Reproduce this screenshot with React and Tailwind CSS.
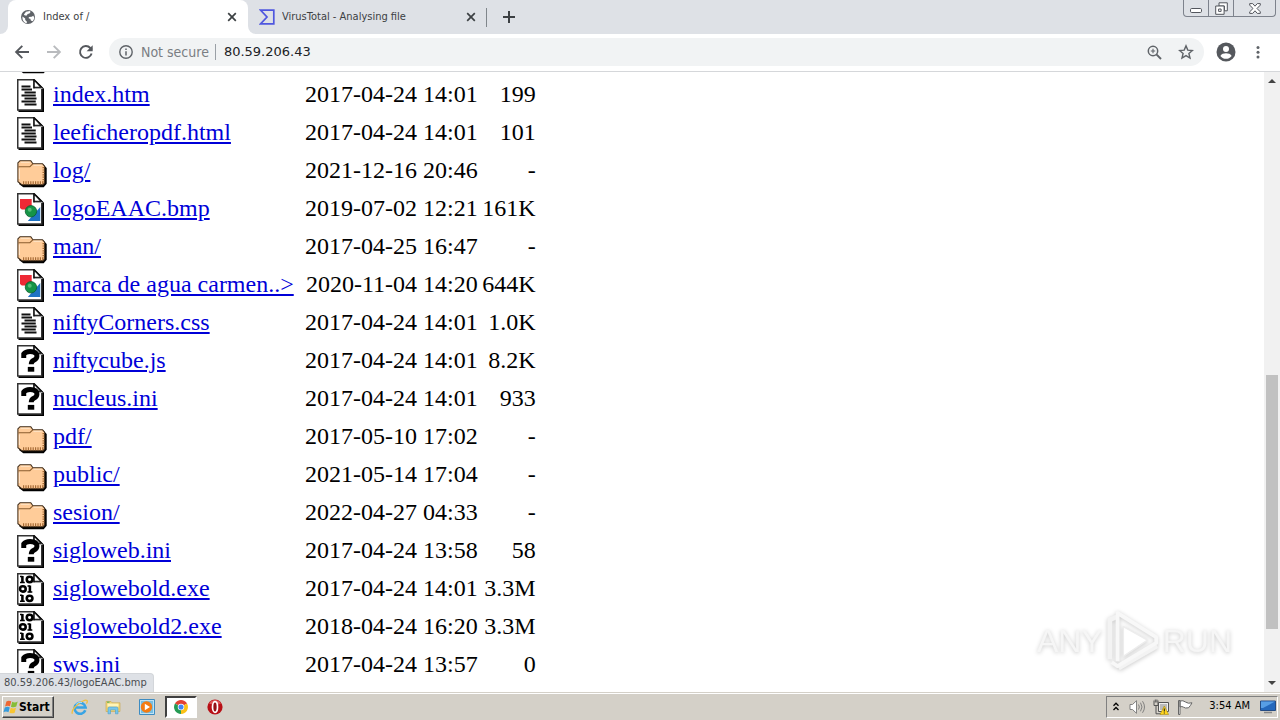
import React from "react";

const UI = "font-['DejaVu_Sans_Condensed','DejaVu_Sans',sans-serif]";

const FILES = [
  { icon: "folder", name: "", date: "", size: "" },
  { icon: "text", name: "index.htm", date: "2017-04-24 14:01", size: "199" },
  { icon: "text", name: "leeficheropdf.html", date: "2017-04-24 14:01", size: "101" },
  { icon: "folder", name: "log/", date: "2021-12-16 20:46", size: "-" },
  { icon: "image", name: "logoEAAC.bmp", date: "2019-07-02 12:21", size: "161K" },
  { icon: "folder", name: "man/", date: "2017-04-25 16:47", size: "-" },
  { icon: "image", name: "marca de agua carmen..>", date: "2020-11-04 14:20", size: "644K" },
  { icon: "text", name: "niftyCorners.css", date: "2017-04-24 14:01", size: "1.0K" },
  { icon: "unknown", name: "niftycube.js", date: "2017-04-24 14:01", size: "8.2K" },
  { icon: "unknown", name: "nucleus.ini", date: "2017-04-24 14:01", size: "933" },
  { icon: "folder", name: "pdf/", date: "2017-05-10 17:02", size: "-" },
  { icon: "folder", name: "public/", date: "2021-05-14 17:04", size: "-" },
  { icon: "folder", name: "sesion/", date: "2022-04-27 04:33", size: "-" },
  { icon: "unknown", name: "sigloweb.ini", date: "2017-04-24 13:58", size: "58" },
  { icon: "binary", name: "siglowebold.exe", date: "2017-04-24 14:01", size: "3.3M" },
  { icon: "binary", name: "siglowebold2.exe", date: "2018-04-24 16:20", size: "3.3M" },
  { icon: "unknown", name: "sws.ini", date: "2017-04-24 13:57", size: "0" },
];

function Page({ children }) {
  return (
    <>
      <path d="M1 1.5h12l5 5V22H1z" fill="#000" />
      <path d="M.5.5h10.8l5.200 5.200V20.600H.5z" fill="#fff" stroke="#333" />
      <path d="M11.300.5v5.200h5.200z" fill="#fff" stroke="#111" strokeWidth="1.100" />
      <path d="M12 6.300h5" stroke="#aaa" strokeWidth=".8" />
      {children}
    </>
  );
}

function FileIcon({ kind }) {
  return (
    <svg className="mt-[2px] block h-[33px] w-[30px]" viewBox="0 0 20 22" aria-hidden="true">
      {kind === "folder" && (
        <>
          <path d="M1.500 6 3 4.800h5.600L10 6.400h7.600l2.200 2.200v10.600l-2 2.300H4.200L1.500 19.500z" fill="#000" />
          <path d="M.6 5.200 2 3.800h7.200l1.400 2h6.400l1.400 1.600v11.200l-1 1.200H3.200L.6 17.800z" fill="#ffcc99" stroke="#3d2a17" strokeWidth=".7" />
          <path d="M1 7.800h7.600l1.900-1.900" fill="none" stroke="#8a5c2e" strokeWidth=".7" />
          <path d="M2.500 4.800h6M11 6.800h5.500M1.600 9v7" fill="none" stroke="#ffe6cc" strokeWidth=".7" />
          <path d="M4 18.500h13.400" stroke="#a86c36" strokeWidth="2" strokeDasharray=".8 .8" />
          <path d="M17.600 8v10.500" stroke="#a86c36" strokeWidth="1.200" strokeDasharray=".8 .8" />
        </>
      )}
      {kind === "text" && (
        <Page>
          <path d="M3 5h6M3 7h7M5 9h7.500M3 11h9.500M5 13h8M3 15h9.500M5 17h8" stroke="#111" strokeWidth="1.200" />
        </Page>
      )}
      {kind === "image" && (
        <Page>
          <path d="M2 4h7.800v7H3.200L2 10z" fill="#ee2935" />
          <path d="M15.500 9.400v9.200H7.200z" fill="#1e73c4" />
          <circle cx="9.300" cy="12.200" r="3.800" fill="#159447" stroke="#07592b" strokeWidth=".5" />
          <circle cx="8.500" cy="11.200" r="1.300" fill="#55bd79" />
        </Page>
      )}
      {kind === "unknown" && (
        <Page>
          <path d="M4.500 8.600V6Q5.700 4.300 8.700 4.300q4.600 0 4.600 3 0 1.900-2.100 2.900-1.700.8-1.700 2.600" fill="none" stroke="#000" strokeWidth="3.300" />
          <path d="M7.200 14.600h4.300v3.200H7.200z" fill="#000" />
        </Page>
      )}
      {kind === "binary" && (
        <Page>
          <g fill="none" stroke="#000">
            <path d="M3.600 2v4.600M8.600 8.300v4.600M3.600 14.600v4.600" strokeWidth="1.700" />
            <path d="M2 2.300h1.600M2 6.300h3.200M7 8.600h1.600M7 12.600h3.200M2 14.900h1.600M2 18.900h3.200" strokeWidth="1" />
            <g strokeWidth="1.700">
              <ellipse cx="8.400" cy="4.300" rx="1.900" ry="1.800" />
              <ellipse cx="3.900" cy="10.600" rx="1.900" ry="1.800" />
              <ellipse cx="8.400" cy="16.900" rx="1.900" ry="1.800" />
            </g>
          </g>
        </Page>
      )}
    </svg>
  );
}

function CloseIcon() {
  return (
    <svg className="size-[10px]" viewBox="0 0 10 10" aria-hidden="true">
      <path d="m1.200 1.200 7.600 7.600m0-7.600L1.200 8.800" stroke="#3c4043" strokeWidth="1.700" />
    </svg>
  );
}

function TabStrip() {
  return (
    <div className="flex h-[34px] shrink-0 bg-[#dee1e6]">
      <div className="w-2 bg-white">
        <div className="h-full rounded-br-lg bg-[#dee1e6]" />
      </div>
      <div className="flex w-60 items-center rounded-t-lg bg-white pr-[11px] pl-3">
        <svg className="size-4" viewBox="0 0 16 16" aria-hidden="true">
          <circle cx="8" cy="8" r="7" fill="#5f6368" />
          <path d="M2.500 7.400 5.200 9.600v1.500l1.600 1.300v1.700C3.900 13.700 2 11 2.500 7.400zM6 2.800 9.800 2l.8 1-1.200 1.500-1.800.4-.8 1.700H4.900l-1-1zM8.800 8l2.800-.2 1.700-1.100.9 1.700c-.1 1.600-.8 3-1.800 3.900l-1.500-.9-.6-1.700-1.500-.3z" fill="#fff" />
        </svg>
        <span className="ml-[7px] flex-1 truncate text-[11px] text-[#3c4043]">Index of /</span>
        <button aria-label="Close tab"><CloseIcon /></button>
      </div>
      <div className="flex w-[238px] bg-white">
        <div className="flex flex-1 items-center rounded-bl-lg bg-[#dee1e6] pr-[10px] pl-[11px]">
          <svg className="size-4" viewBox="0 0 16 16" aria-hidden="true">
            <path d="M1.500 1.200h13.300v13.600H1.500L8 8z" fill="none" stroke="#4f57df" strokeWidth="1.700" />
          </svg>
          <span className="ml-[7px] flex-1 truncate text-[11px] text-[#3c4043]">VirusTotal - Analysing file</span>
          <button aria-label="Close tab"><CloseIcon /></button>
        </div>
      </div>
      <div className="mt-2 h-[19px] w-px bg-[#80868b]" />
      <button className="ml-4 self-center" aria-label="New tab">
        <svg className="size-3" viewBox="0 0 12 12" aria-hidden="true">
          <path d="M6 0v12M0 6h12" stroke="#3c4043" strokeWidth="2" />
        </svg>
      </button>
      <div className="mr-1 ml-auto flex h-[17px] w-[93px] rounded-b border border-t-0 border-[#7d828c]">
        <button className="flex flex-1 items-center justify-center border-r border-[#7d828c]" aria-label="Minimize">
          <svg className="mt-1 h-[5px] w-3" viewBox="0 0 12 5" aria-hidden="true">
            <rect x=".5" y=".5" width="11" height="4" rx="1.200" fill="#fff" stroke="#53565d" />
          </svg>
        </button>
        <button className="flex flex-1 items-center justify-center border-r border-[#7d828c]" aria-label="Restore">
          <svg className="size-[13px]" viewBox="0 0 13 13" fill="#fff" stroke="#53565d" aria-hidden="true">
            <path d="M4 .8h8.300v8H9.500V4H4z" />
            <path d="M.7 4h8.400v8.300H.7zM3.600 7h2.500v2.400H3.600z" />
          </svg>
        </button>
        <button className="flex w-[41px] items-center justify-center" aria-label="Close">
          <svg className="h-[11px] w-3" viewBox="0 0 12 11" aria-hidden="true">
            <path d="M.7.6h3L6 3.200 8.300.6h3v1.500L8 5.500l3.300 3.300v1.600h-3L6 7.800l-2.300 2.600h-3V8.800L4 5.500.7 2.100z" fill="#fff" stroke="#53565d" />
          </svg>
        </button>
      </div>
    </div>
  );
}

function Toolbar() {
  return (
    <div className="flex h-[38px] shrink-0 items-center border-b border-[#d5d7da] bg-white pb-px pl-[14px]">
      <button aria-label="Back">
        <svg className="size-4" viewBox="0 0 16 16" fill="none" stroke="#55585d" strokeWidth="1.900" aria-hidden="true">
          <path d="M15 8H2.500M8.300 1.800 2.100 8l6.200 6.200" />
        </svg>
      </button>
      <button className="ml-4" aria-label="Forward">
        <svg className="size-4" viewBox="0 0 16 16" fill="none" stroke="#b9bbbe" strokeWidth="1.900" aria-hidden="true">
          <path d="M1 8h12.500M7.700 1.800 13.900 8l-6.200 6.200" />
        </svg>
      </button>
      <button className="ml-4" aria-label="Reload">
        <svg className="size-4" viewBox="0 0 16 16" fill="none" stroke="#55585d" strokeWidth="1.900" aria-hidden="true">
          <path d="M13.600 9.600A5.900 5.900 0 1 1 12.300 4L14 5.700" />
          <path d="M14.700 1.200v6.100H8.600z" fill="#55585d" stroke="none" />
        </svg>
      </button>
      <div className="ml-[15px] flex h-7 flex-1 items-center rounded-full bg-[#f1f3f4] pr-[10px] pl-[10px]">
        <svg className="size-[14px]" viewBox="0 0 14 14" fill="none" stroke="#5f6368" aria-hidden="true">
          <circle cx="7" cy="7" r="6.200" strokeWidth="1.400" />
          <path d="M7 6.200v4.200M7 3.400v1.600" strokeWidth="1.500" />
        </svg>
        <span className="ml-2 text-[14px] whitespace-nowrap text-[#7a7e83]">Not secure</span>
        <span className="mr-2 ml-[6px] h-4 w-px bg-[#9aa0a6]" />
        <input
          className="min-w-0 flex-1 bg-transparent font-['DejaVu_Sans',sans-serif] text-[13px] text-[#202124] outline-none"
          aria-label="Address"
          defaultValue="80.59.206.43"
        />
        <button aria-label="Zoom">
          <svg className="size-[15px]" viewBox="0 0 15 15" fill="none" stroke="#5f6368" aria-hidden="true">
            <circle cx="6" cy="6" r="4.700" strokeWidth="1.500" />
            <path d="m9.400 9.400 4.600 4.600" strokeWidth="1.900" />
            <path d="M6 3.800v4.400M3.800 6h4.400" strokeWidth="1.100" />
          </svg>
        </button>
        <button className="ml-4" aria-label="Bookmark">
          <svg className="size-4" viewBox="0 0 16 16" fill="none" stroke="#5f6368" strokeWidth="1.400" aria-hidden="true">
            <path d="m8 1.900 1.800 4.200 4.600.4-3.500 3 1.100 4.500L8 11.600 4 14l1.100-4.500-3.500-3 4.600-.4z" />
          </svg>
        </button>
      </div>
      <button className="ml-3" aria-label="Profile">
        <svg className="size-5" viewBox="0 0 20 20" aria-hidden="true">
          <circle cx="10" cy="10" r="9.500" fill="#55585d" />
          <circle cx="10" cy="7" r="3" fill="#fff" />
          <path d="M4.400 14C5 11.800 8 11.200 10 11.200s5 .6 5.600 2.800C14 16 12.100 16.800 10 16.800S6 16 4.400 14z" fill="#fff" />
        </svg>
      </button>
      <button className="mr-[14px] ml-[14px]" aria-label="Menu">
        <svg className="h-4 w-4" viewBox="0 0 16 16" fill="#5f6368" aria-hidden="true">
          <circle cx="8" cy="3.400" r="1.500" />
          <circle cx="8" cy="8.200" r="1.500" />
          <circle cx="8" cy="13" r="1.500" />
        </svg>
      </button>
    </div>
  );
}

function Watermark() {
  return (
    <div className="absolute right-12 bottom-[18px] flex items-center gap-[2px] font-['Liberation_Sans',sans-serif] text-[32px] leading-[66px] text-[#f6f6f6] [filter:drop-shadow(0_1px_2px_#cacaca)]">
      <span>ANY</span>
      <svg className="h-[66px] w-14" viewBox="0 0 58 66" fill="none" strokeLinejoin="round" aria-hidden="true">
        <path d="M5 52V11l7-3M14 61l40-23" stroke="#f3f3f3" strokeWidth="5" />
        <path d="M13 54V4l40 25v6L13 59l-6-4" stroke="#f8f8f8" strokeWidth="4" />
        <path d="M19 18v31l25-17z" fill="#fff" stroke="#ededed" strokeWidth="1.500" />
      </svg>
      <span>RUN</span>
    </div>
  );
}

function Scrollbar() {
  return (
    <div className="flex w-4 shrink-0 flex-col bg-[#f1f1f1]" aria-hidden="true">
      <svg className="size-4" viewBox="0 0 16 16"><path d="M4 11h8L8 7z" fill="#444" /></svg>
      <div className="grow-[287]" />
      <div className="mx-[2px] grow-[254] bg-[#c1c1c1]" />
      <div className="grow-[47]" />
      <svg className="size-4" viewBox="0 0 16 16"><path d="M4 5h8l-4 4z" fill="#444" /></svg>
    </div>
  );
}

function Listing() {
  return (
    <main className="relative flex min-h-0 flex-1 bg-white">
      <div className="min-w-0 flex-1 overflow-hidden">
        <table className="-mt-[33px] ml-[17px] table-fixed border-collapse font-['Liberation_Serif',serif] text-[24px] leading-[34px] text-black">
          <colgroup>
            <col className="w-9" />
            <col className="w-[252px]" />
            <col className="w-[171px]" />
            <col className="w-[58px]" />
          </colgroup>
          <tbody>
            {FILES.map((f, i) => (
              <tr key={i} className="h-[38px] align-top whitespace-nowrap">
                <td className="p-0"><FileIcon kind={f.icon} /></td>
                <td className="p-0">
                  {f.name && <a href="#" className="text-[#0000d8] underline">{f.name}</a>}
                </td>
                <td className="p-0 text-right">{f.date}</td>
                <td className="p-0 text-right">{f.size}</td>
              </tr>
            ))}
          </tbody>
        </table>
      </div>
      <Scrollbar />
      <Watermark />
      <div className="absolute bottom-0 left-0 h-[19px] rounded-tr border-t border-r border-[#d3d6da] bg-[#dee1e6] pr-[6px] pl-1 text-[11px] leading-[18px] text-[#4a4d51]">
        80.59.206.43/logoEAAC.bmp
      </div>
    </main>
  );
}

function Taskbar() {
  return (
    <footer className="flex h-7 shrink-0 items-center border-t border-[#d4d0c8] bg-[#d4d0c8] pr-[2px] pl-[2px] text-[11px] text-black shadow-[inset_0_1px_0_#fff]">
      <button className="flex h-[22px] w-[52px] items-center border border-t-white border-r-[#404040] border-b-[#404040] border-l-white text-[12px] font-bold shadow-[inset_-1px_-1px_0_#808080]">
        <svg className="h-4 w-4 shrink-0" viewBox="0 0 17 16" aria-hidden="true">
          <path d="M3.600 2.200Q6 .4 8.800 2L7.400 7.300Q5 6 2.200 7.500z" fill="#ee6733" />
          <path d="M9.800 2.500q2.800 1.400 5.800-.3l-1.500 5.400q-2.800 1.500-5.700.1z" fill="#86bd38" />
          <path d="M1.900 8.600q2.700-1.500 5.300-.2l-1.400 5.200q-2.700-1.400-5.300 0z" fill="#369bdc" />
          <path d="M8.200 8.900q2.800 1.400 5.600 0l-1.400 5.100q-2.700 1.500-5.500 0z" fill="#f8c532" />
        </svg>
        Start
      </button>
      <button className="ml-4 p-px" aria-label="Internet Explorer">
        <svg className="h-4 w-[18px]" viewBox="0 0 18 16" fill="none" aria-hidden="true">
          <path d="M14.300 11.300A5.500 5.500 0 1 1 14.600 8.500H5" stroke="#39a4e4" strokeWidth="2.600" />
          <path d="M1.500 14.700C-.5 12 6 4.500 12 2c4-1.800 5.300-.2 3.400 2.600" stroke="#f0bf3f" strokeWidth="1.300" />
          <path d="M5 5.500q2-3 6-2" stroke="#9ddcff" />
        </svg>
      </button>
      <button className="ml-[15px]" aria-label="File Explorer">
        <svg className="size-4" viewBox="0 0 16 16" aria-hidden="true">
          <path d="M1 2.500h5l1 1.300h8v8.700H1z" fill="#f0d376" stroke="#c7a64a" strokeWidth=".6" />
          <path d="M2.500 4.600h11v3h-11z" fill="#fff5b8" />
          <path d="M2 3.200h2.500" stroke="#64b75c" strokeWidth="1.200" />
          <path d="M3 14.800V9.500Q3 8 4.500 8h7Q13 8 13 9.500v5.300h-2.500v-4h-5v4z" fill="#77c6ec" stroke="#4b9fcb" strokeWidth=".6" />
        </svg>
      </button>
      <button className="ml-[18px]" aria-label="Media Player">
        <svg className="size-4" viewBox="0 0 16 16" aria-hidden="true">
          <path d="M.5.5h15v15H.5z" fill="#bfe2f4" stroke="#3d8cc2" />
          <path d="M2 2h12v12H2z" fill="#76bfe4" />
          <circle cx="7.500" cy="8" r="5.700" fill="#f47b12" />
          <path d="M5.800 4.700v6.600L11 8z" fill="#fff" />
        </svg>
      </button>
      <button className="ml-[10px] flex h-[22px] w-8 items-center justify-center border-2 border-t-[#404040] border-r-white border-b-white border-l-[#404040] bg-white" aria-label="Chrome">
        <svg className="size-[14px]" viewBox="0 0 16 16" aria-hidden="true">
          <path d="M8 8 1.100 4A8 8 0 0 1 14.900 4z" fill="#e34133" />
          <path d="M8 8 14.900 4A8 8 0 0 1 8 16z" fill="#fbc116" />
          <path d="M8 8v8A8 8 0 0 1 1.100 4z" fill="#269b54" />
          <circle cx="8" cy="8" r="3.700" fill="#fff" />
          <circle cx="8" cy="8" r="2.900" fill="#4285f4" />
        </svg>
      </button>
      <button className="ml-[10px]" aria-label="Opera">
        <svg className="size-4" viewBox="0 0 16 16" aria-hidden="true">
          <circle cx="8" cy="8" r="7.600" fill="#b80f16" />
          <path d="M2 4.500A7 7 0 0 1 14 4.500Q8 7 2 4.500" fill="#df5355" />
          <ellipse cx="8" cy="8" rx="2.500" ry="5.300" fill="#951016" stroke="#fff" strokeWidth="1.700" />
        </svg>
      </button>
      <div className="ml-auto flex h-[22px] w-[172px] items-center border border-t-[#808080] border-r-white border-b-white border-l-[#808080] pr-px pl-[6px]">
        <button aria-label="Show hidden icons">
          <svg className="h-[9px] w-[6px]" viewBox="0 0 6 9" fill="none" stroke="#000" strokeWidth="1.300" aria-hidden="true">
            <path d="m.5 3.700 2.500-2.500 2.500 2.500M.5 8 3 5.500 5.500 8" />
          </svg>
        </button>
        <svg className="ml-[10px] size-4" viewBox="0 0 16 16" fill="#fff" stroke="#777" strokeWidth=".9" aria-hidden="true">
          <path d="M1 5.500h2.500l4-3.800v12.600l-4-3.800H1z" />
          <path d="M9.500 5.500q1.700 2.500 0 5M11.500 3.700q3 4.300 0 8.600M13.500 2.200q4 5.800 0 11.600" fill="none" />
        </svg>
        <svg className="ml-2 size-4" viewBox="0 0 16 16" aria-hidden="true">
          <path d="M5.500 3.500h10v9h-10z" fill="#eee" stroke="#555" />
          <path d="M7 5h7v6H7z" fill="#bbb" />
          <path d="M1 1.500v5h4v-5M3 6.500v8.300h5M2.300.5v3M3.900.5v3" fill="none" stroke="#555" />
          <path d="m11.300 7 4.300 8.500H7z" fill="#ffd51c" stroke="#a98b12" strokeWidth=".6" />
          <path d="M11.300 9.500v3M11.300 13.400v1" stroke="#222" strokeWidth="1.100" />
        </svg>
        <svg className="ml-2 size-4" viewBox="0 0 16 16" fill="#fff" stroke="#666" aria-hidden="true">
          <path d="M1.500 1.500h1.500v14H1.500zM3 2q3-1 5.500 1t6.500.8q-1.500 3-3.500 5Q8 9.500 6.500 8.200T3 8z" />
        </svg>
        <span className="ml-auto text-[11px] whitespace-nowrap">3:54 AM</span>
        <button className="ml-[10px]" aria-label="Show desktop">
          <svg className="h-[14px] w-4" viewBox="0 0 16 14" aria-hidden="true">
            <path d="M.5 1h15v9.500H.5z" fill="#2468bc" stroke="#244b83" />
            <path d="M1 1.500h14L3 8H1z" fill="#579ee5" />
            <path d="M4 12.500h8" stroke="#888" strokeWidth="1.500" />
          </svg>
        </button>
      </div>
    </footer>
  );
}

export default function App() {
  return (
    <div className={`flex h-screen flex-col overflow-hidden bg-white ${UI}`}>
      <TabStrip />
      <Toolbar />
      <Listing />
      <Taskbar />
    </div>
  );
}
